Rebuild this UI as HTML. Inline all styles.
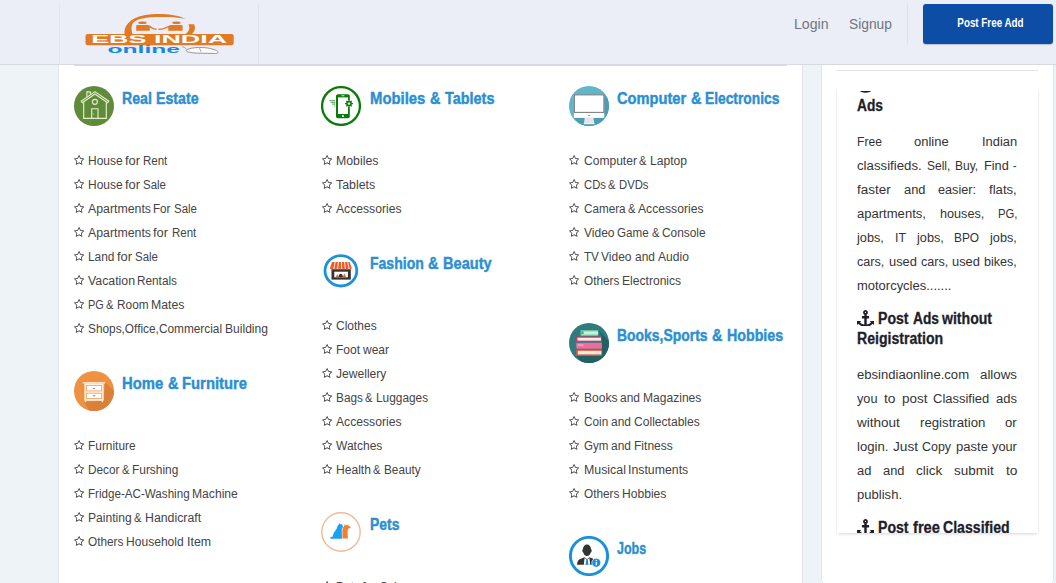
<!DOCTYPE html>
<html lang="en"><head><meta charset="utf-8"><title>EBS India Online - Free Classifieds</title>
<style>
*{box-sizing:border-box;margin:0;padding:0}
html,body{width:1056px;height:583px;overflow:hidden}
body{background:#eef3f8;font-family:"Liberation Sans",Arial,sans-serif;color:#444;position:relative}
a{color:inherit;text-decoration:none}
ul{list-style:none}
.hdr{position:absolute;left:0;top:0;width:1056px;height:65px;background:#ebeef7;border-bottom:1px solid #d6d9e0;z-index:5}
.logo{position:absolute;left:59px;top:4px;width:200px;height:60px;border-left:1px solid #e3e6ee;border-right:1px solid #e0e3eb}
.logo svg{position:absolute;left:0;top:0}
.nav a{position:absolute;top:15px;font-size:14px;line-height:18px;color:#6f7780;white-space:nowrap;transform-origin:0 50%;display:block}
.vdiv{position:absolute;left:907px;top:4px;width:1px;height:40px;background:#dcdfe8}
.btn{position:absolute;left:923px;top:4px;width:130px;height:39.5px;padding-left:5px;background:#0d4da5;border-radius:3px;color:#fff;font-weight:bold;font-size:12px;line-height:38px;text-align:center;box-shadow:0 1px 1px rgba(0,0,0,.2)}
.btn span{display:inline-block;transform-origin:50% 50%;white-space:nowrap}
.main{position:absolute;left:58px;top:65px;width:745px;height:518px;background:#fff;border-left:1px solid #e3e7ed;border-right:1px solid #e3e7ed}
.hr{position:absolute;left:74px;top:65px;width:713px;height:1px;background:#d9d9d9;z-index:6}
.cat{position:absolute;width:240px}
.ic{position:absolute;left:0;top:0;width:40px;height:40px;display:block}
.cat h3{display:flex;gap:4.45px;position:absolute;left:48px;top:.3px;-webkit-text-stroke:.45px #2b8fd2;font-size:17.3px;line-height:24px;font-weight:bold;color:#2b8fd2;white-space:nowrap;transform-origin:0 50%}
.cat ul{position:absolute;left:0;top:62px}
.cat li{height:24px;line-height:24px;font-size:12px;white-space:nowrap;color:#444;position:relative}
.cat li a{position:absolute;left:13.5px;top:1px;display:flex;gap:2.98px}
.cat b{display:block;font-weight:inherit;transform-origin:0 50%;white-space:nowrap}
.st{position:absolute;left:0;top:7.2px;width:10.2px;height:9.8px;fill:#444}
.c2 .st{left:.75px}
.c3 .st{left:.35px}
.cat .c2 a,.cat .c3 a{left:14.5px}
.side{position:absolute;left:821px;top:65px;width:233px;height:519px;background:#fff;border-radius:0 0 5px 5px;border-left:1px solid #e3e7ed;border-right:1px solid #e3e7ed}
.shr{position:absolute;left:837px;top:70px;width:201px;height:1px;background:#e3e3e3}
.card{position:absolute;left:837px;top:88px;width:201px;height:445px;background:#fff;box-shadow:0 2px 3px -1px rgba(0,0,0,.16),1px 0 0 rgba(0,0,0,.035),-1px 0 0 rgba(0,0,0,.035)}
.clip{position:absolute;left:0;top:3px;width:201px;height:442px;overflow:hidden}
.cin{position:absolute;left:20px;top:-15px;width:160px}
.card h4{font-size:16px;line-height:20px;height:20px;font-weight:bold;color:#1e1e2a;-webkit-text-stroke:.3px #1e1e2a;white-space:nowrap;position:relative}
.card h4{display:flex;align-items:center}
.card h4 .w{display:flex;gap:3.88px}
.card h4 .up{position:relative;top:-1.5px}
.card h4 b{display:block;font-weight:inherit;transform-origin:0 50%;white-space:nowrap}
.an{display:block;flex:none;width:17px;height:16.8px;fill:#1e1e2a;margin-right:4.2px;position:relative;top:-1px}
.card p{font-size:12.92px;line-height:24px;color:#333}
.card p span{display:flex;height:24px;justify-content:space-between;white-space:nowrap}
.card p span.l{justify-content:flex-start;gap:3.2px}
.card p b{display:block;font-weight:normal;transform-origin:0 50%;white-space:nowrap}
</style></head><body>
<div class="hdr">
<div class="logo">
<svg width="200" height="60" viewBox="0 0 200 60">
<g fill="#e07a24">
<path d="M64.5 30.5C63.5 22 70 14 84 11.3 92 9.8 104 9.7 112 10.9 118 11.8 122 13 125.4 14.8 118 13.4 110 13 101 13 88 13 74 14.5 72 21 71.2 24 71.5 27 72.6 30.500Z"/>
<path d="M128.4 20.3L134 20.3C136 24 134.8 27.5 131.6 30.5L125.3 30.5C129 27.5 130.4 24 128.4 20.3Z"/>
<ellipse cx="82.4" cy="18.8" rx="4.3" ry="1.25"/><path d="M76.2 26.8V22.4c0-.8.5-1.3 1.3-1.3h9.6c1.4 0 2.4.4 3.4 1l3 1.800c.9.5 1.9.7 3.1.7v1.300c-1.6 0-2.9-.3-4-.9l-2.8-1.500v3.300z"/>
<ellipse cx="116.4" cy="18.8" rx="4.3" ry="1.25"/><path d="M122.6 26.8V22.4c0-.8-.5-1.3-1.3-1.3h-9.6c-1.4 0-2.4.4-3.4 1l-5.5 2.100c-1.2.4-2.6.5-4.4.4v1.300c2.2.1 4-.1 5.4-.7l4.5-1.700v3.300z"/>
</g>
<rect x="25.5" y="30" width="148.2" height="11.2" rx="2.2" fill="#e07a24"/>
<text x="99.2" y="38.8" text-anchor="middle" font-family="Liberation Sans,Arial,sans-serif" font-weight="bold" font-size="10.4" fill="#fff" textLength="136" lengthAdjust="spacingAndGlyphs">EBS INDIA</text>
<text x="83.8" y="48.6" text-anchor="middle" font-family="Liberation Sans,Arial,sans-serif" font-weight="bold" font-size="10.8" fill="#1c86dc" textLength="72.5" lengthAdjust="spacingAndGlyphs">online</text>
<path d="M128 45.200c8-3 22-2 28.5 1.4 3 1.7 1.4 3.2-2.2 2.9-8-.5-19.5.4-26.3-1.5-2.6-1-2.6-2 0-2.800z" fill="#fafafa" stroke="#8f8f8f" stroke-width=".9"/>
<path d="M122 42.800c2 .2 3.4 1 4.6 2.600M139.5 44.200l1.5 3.6" fill="none" stroke="#8f8f8f" stroke-width=".8"/>
</svg>
</div>
<div class="nav"><a href="#" style="left:794px;transform:scaleX(1.0078)">Login</a><a href="#" style="left:848.6px;transform:scaleX(0.9839)">Signup</a></div>
<div class="vdiv"></div>
<a href="#" class="btn"><span style="transform:scaleX(0.8182)">Post Free Add</span></a>
</div>
<div class="main"></div>
<div class="hr"></div>
<div class="cat" style="left:74px;top:86px"><svg class="ic" viewBox="0 0 40 40"><circle cx="20" cy="20" r="20" fill="#5f8b3b"/><g fill="none" stroke="#e6eec9" stroke-width="1.150" stroke-linejoin="miter"><path d="M12.9 10.800V5.900h3.400v2.6"/><path d="M7.2 15.2 20.9 5.6 34.8 15.2 33.6 16.8 20.9 8 8.4 16.8Z"/><path d="M9.7 16.2V32.4H32.3V16.2"/><circle cx="20.9" cy="15.8" r="2.5"/><path d="M17.7 32.4V22.7H24V32.4"/></g><circle cx="19.6" cy="28" r=".6" fill="#e4edc6"/></svg><h3><b style="width:29.86px;transform:scaleX(0.8179)">Real</b> <b style="width:42.58px;transform:scaleX(0.8208)">Estate</b></h3><ul><li><svg class="st" viewBox="0 -1504 1664 1587"><path transform="scale(1,-1)" d="M1137 532 1443 829 1021 891 832 1273 643 891 221 829 527 532 454 111 832 310 1209 111ZM1664 889Q1664 867 1638 841L1275 487L1361 -13Q1362 -20 1362 -33Q1362 -83 1321 -83Q1302 -83 1281 -71L832 165L383 -71Q361 -83 343 -83Q322 -83 311.5 -68.5Q301 -54 301 -33Q301 -27 303 -13L389 487L25 841Q0 868 0 889Q0 926 56 935L558 1008L783 1463Q802 1504 832.0 1504.0Q862 1504 881 1463L1106 1008L1608 935Q1664 926 1664 889Z"/></svg><a href="#"><b style="width:34.58px;transform:scaleX(0.9968)">House</b> <b style="width:15.09px;transform:scaleX(1.0769)">for</b> <b style="width:24.31px;transform:scaleX(0.9587)">Rent</b></a></li><li><svg class="st" viewBox="0 -1504 1664 1587"><path transform="scale(1,-1)" d="M1137 532 1443 829 1021 891 832 1273 643 891 221 829 527 532 454 111 832 310 1209 111ZM1664 889Q1664 867 1638 841L1275 487L1361 -13Q1362 -20 1362 -33Q1362 -83 1321 -83Q1302 -83 1281 -71L832 165L383 -71Q361 -83 343 -83Q322 -83 311.5 -68.5Q301 -54 301 -33Q301 -27 303 -13L389 487L25 841Q0 868 0 889Q0 926 56 935L558 1008L783 1463Q802 1504 832.0 1504.0Q862 1504 881 1463L1106 1008L1608 935Q1664 926 1664 889Z"/></svg><a href="#"><b style="width:34.58px;transform:scaleX(0.9968)">House</b> <b style="width:15.09px;transform:scaleX(1.0769)">for</b> <b style="width:22.94px;transform:scaleX(0.9545)">Sale</b></a></li><li><svg class="st" viewBox="0 -1504 1664 1587"><path transform="scale(1,-1)" d="M1137 532 1443 829 1021 891 832 1273 643 891 221 829 527 532 454 111 832 310 1209 111ZM1664 889Q1664 867 1638 841L1275 487L1361 -13Q1362 -20 1362 -33Q1362 -83 1321 -83Q1302 -83 1281 -71L832 165L383 -71Q361 -83 343 -83Q322 -83 311.5 -68.5Q301 -54 301 -33Q301 -27 303 -13L389 487L25 841Q0 868 0 889Q0 926 56 935L558 1008L783 1463Q802 1504 832.0 1504.0Q862 1504 881 1463L1106 1008L1608 935Q1664 926 1664 889Z"/></svg><a href="#"><b style="width:63.02px;transform:scaleX(1.0270)">Apartments</b> <b style="width:17.42px;transform:scaleX(0.9679)">For</b> <b style="width:22.94px;transform:scaleX(0.9545)">Sale</b></a></li><li><svg class="st" viewBox="0 -1504 1664 1587"><path transform="scale(1,-1)" d="M1137 532 1443 829 1021 891 832 1273 643 891 221 829 527 532 454 111 832 310 1209 111ZM1664 889Q1664 867 1638 841L1275 487L1361 -13Q1362 -20 1362 -33Q1362 -83 1321 -83Q1302 -83 1281 -71L832 165L383 -71Q361 -83 343 -83Q322 -83 311.5 -68.5Q301 -54 301 -33Q301 -27 303 -13L389 487L25 841Q0 868 0 889Q0 926 56 935L558 1008L783 1463Q802 1504 832.0 1504.0Q862 1504 881 1463L1106 1008L1608 935Q1664 926 1664 889Z"/></svg><a href="#"><b style="width:63.02px;transform:scaleX(1.0270)">Apartments</b> <b style="width:15.09px;transform:scaleX(1.0769)">for</b> <b style="width:24.31px;transform:scaleX(0.9587)">Rent</b></a></li><li><svg class="st" viewBox="0 -1504 1664 1587"><path transform="scale(1,-1)" d="M1137 532 1443 829 1021 891 832 1273 643 891 221 829 527 532 454 111 832 310 1209 111ZM1664 889Q1664 867 1638 841L1275 487L1361 -13Q1362 -20 1362 -33Q1362 -83 1321 -83Q1302 -83 1281 -71L832 165L383 -71Q361 -83 343 -83Q322 -83 311.5 -68.5Q301 -54 301 -33Q301 -27 303 -13L389 487L25 841Q0 868 0 889Q0 926 56 935L558 1008L783 1463Q802 1504 832.0 1504.0Q862 1504 881 1463L1106 1008L1608 935Q1664 926 1664 889Z"/></svg><a href="#"><b style="width:26.39px;transform:scaleX(0.9883)">Land</b> <b style="width:15.09px;transform:scaleX(1.0769)">for</b> <b style="width:22.94px;transform:scaleX(0.9545)">Sale</b></a></li><li><svg class="st" viewBox="0 -1504 1664 1587"><path transform="scale(1,-1)" d="M1137 532 1443 829 1021 891 832 1273 643 891 221 829 527 532 454 111 832 310 1209 111ZM1664 889Q1664 867 1638 841L1275 487L1361 -13Q1362 -20 1362 -33Q1362 -83 1321 -83Q1302 -83 1281 -71L832 165L383 -71Q361 -83 343 -83Q322 -83 311.5 -68.5Q301 -54 301 -33Q301 -27 303 -13L389 487L25 841Q0 868 0 889Q0 926 56 935L558 1008L783 1463Q802 1504 832.0 1504.0Q862 1504 881 1463L1106 1008L1608 935Q1664 926 1664 889Z"/></svg><a href="#"><b style="width:47.03px;transform:scaleX(1.0266)">Vacation</b> <b style="width:39.95px;transform:scaleX(0.9820)">Rentals</b></a></li><li><svg class="st" viewBox="0 -1504 1664 1587"><path transform="scale(1,-1)" d="M1137 532 1443 829 1021 891 832 1273 643 891 221 829 527 532 454 111 832 310 1209 111ZM1664 889Q1664 867 1638 841L1275 487L1361 -13Q1362 -20 1362 -33Q1362 -83 1321 -83Q1302 -83 1281 -71L832 165L383 -71Q361 -83 343 -83Q322 -83 311.5 -68.5Q301 -54 301 -33Q301 -27 303 -13L389 487L25 841Q0 868 0 889Q0 926 56 935L558 1008L783 1463Q802 1504 832.0 1504.0Q862 1504 881 1463L1106 1008L1608 935Q1664 926 1664 889Z"/></svg><a href="#"><b style="width:15.75px;transform:scaleX(0.9081)">PG</b> <b style="width:7.47px;transform:scaleX(0.9318)">&amp;</b> <b style="width:31.61px;transform:scaleX(0.9873)">Room</b> <b style="width:33.50px;transform:scaleX(1.0249)">Mates</b></a></li><li><svg class="st" viewBox="0 -1504 1664 1587"><path transform="scale(1,-1)" d="M1137 532 1443 829 1021 891 832 1273 643 891 221 829 527 532 454 111 832 310 1209 111ZM1664 889Q1664 867 1638 841L1275 487L1361 -13Q1362 -20 1362 -33Q1362 -83 1321 -83Q1302 -83 1281 -71L832 165L383 -71Q361 -83 343 -83Q322 -83 311.5 -68.5Q301 -54 301 -33Q301 -27 303 -13L389 487L25 841Q0 868 0 889Q0 926 56 935L558 1008L783 1463Q802 1504 832.0 1504.0Q862 1504 881 1463L1106 1008L1608 935Q1664 926 1664 889Z"/></svg><a href="#"><b style="width:134.05px;transform:scaleX(0.9869)">Shops,Office,Commercial</b> <b style="width:42.98px;transform:scaleX(1.0066)">Building</b></a></li></ul></div>
<div class="cat" style="left:74px;top:371px"><svg class="ic" viewBox="0 0 40 40"><defs><clipPath id="cf"><circle cx="20" cy="20" r="20"/></clipPath></defs><circle cx="20" cy="20" r="20" fill="#ee9142"/><g clip-path="url(#cf)"><path d="M31.2 11.3 60 40V70H30L10.4 30.8 29.6 29.8Z" fill="#da8038"/><rect x="8.5" y="11.2" width="22.7" height="1.2" fill="#fdf3e4"/><rect x="10.4" y="12.4" width="19.2" height="17.4" fill="#fdf3e4"/><rect x="12.3" y="14.6" width="15.4" height="5.3" fill="#fff" stroke="#ee9b58" stroke-width=".8"/><rect x="12.3" y="22.2" width="15.4" height="5.2" fill="#fff" stroke="#ee9b58" stroke-width=".8"/><rect x="18.8" y="17" width="2.4" height=".7" fill="#8a5a3a"/><rect x="18.8" y="24.5" width="2.4" height=".7" fill="#5a3a2a"/><rect x="11" y="29.8" width="1.2" height="1.4" fill="#fdf3e4"/><rect x="27.8" y="29.8" width="1.2" height="1.4" fill="#fdf3e4"/></g></svg><h3><b style="width:41.18px;transform:scaleX(0.8576)">Home</b> <b style="width:10.43px;transform:scaleX(0.8352)">&amp;</b> <b style="width:65.08px;transform:scaleX(0.8581)">Furniture</b></h3><ul><li><svg class="st" viewBox="0 -1504 1664 1587"><path transform="scale(1,-1)" d="M1137 532 1443 829 1021 891 832 1273 643 891 221 829 527 532 454 111 832 310 1209 111ZM1664 889Q1664 867 1638 841L1275 487L1361 -13Q1362 -20 1362 -33Q1362 -83 1321 -83Q1302 -83 1281 -71L832 165L383 -71Q361 -83 343 -83Q322 -83 311.5 -68.5Q301 -54 301 -33Q301 -27 303 -13L389 487L25 841Q0 868 0 889Q0 926 56 935L558 1008L783 1463Q802 1504 832.0 1504.0Q862 1504 881 1463L1106 1008L1608 935Q1664 926 1664 889Z"/></svg><a href="#"><b style="width:47.59px;transform:scaleX(0.9909)">Furniture</b></a></li><li><svg class="st" viewBox="0 -1504 1664 1587"><path transform="scale(1,-1)" d="M1137 532 1443 829 1021 891 832 1273 643 891 221 829 527 532 454 111 832 310 1209 111ZM1664 889Q1664 867 1638 841L1275 487L1361 -13Q1362 -20 1362 -33Q1362 -83 1321 -83Q1302 -83 1281 -71L832 165L383 -71Q361 -83 343 -83Q322 -83 311.5 -68.5Q301 -54 301 -33Q301 -27 303 -13L389 487L25 841Q0 868 0 889Q0 926 56 935L558 1008L783 1463Q802 1504 832.0 1504.0Q862 1504 881 1463L1106 1008L1608 935Q1664 926 1664 889Z"/></svg><a href="#"><b style="width:31.44px;transform:scaleX(0.9819)">Decor</b> <b style="width:7.47px;transform:scaleX(0.9318)">&amp;</b> <b style="width:46.28px;transform:scaleX(0.9913)">Furshing</b></a></li><li><svg class="st" viewBox="0 -1504 1664 1587"><path transform="scale(1,-1)" d="M1137 532 1443 829 1021 891 832 1273 643 891 221 829 527 532 454 111 832 310 1209 111ZM1664 889Q1664 867 1638 841L1275 487L1361 -13Q1362 -20 1362 -33Q1362 -83 1321 -83Q1302 -83 1281 -71L832 165L383 -71Q361 -83 343 -83Q322 -83 311.5 -68.5Q301 -54 301 -33Q301 -27 303 -13L389 487L25 841Q0 868 0 889Q0 926 56 935L558 1008L783 1463Q802 1504 832.0 1504.0Q862 1504 881 1463L1106 1008L1608 935Q1664 926 1664 889Z"/></svg><a href="#"><b style="width:101.61px;transform:scaleX(0.9684)">Fridge-AC-Washing</b> <b style="width:45.81px;transform:scaleX(1.0100)">Machine</b></a></li><li><svg class="st" viewBox="0 -1504 1664 1587"><path transform="scale(1,-1)" d="M1137 532 1443 829 1021 891 832 1273 643 891 221 829 527 532 454 111 832 310 1209 111ZM1664 889Q1664 867 1638 841L1275 487L1361 -13Q1362 -20 1362 -33Q1362 -83 1321 -83Q1302 -83 1281 -71L832 165L383 -71Q361 -83 343 -83Q322 -83 311.5 -68.5Q301 -54 301 -33Q301 -27 303 -13L389 487L25 841Q0 868 0 889Q0 926 56 935L558 1008L783 1463Q802 1504 832.0 1504.0Q862 1504 881 1463L1106 1008L1608 935Q1664 926 1664 889Z"/></svg><a href="#"><b style="width:43.80px;transform:scaleX(1.0097)">Painting</b> <b style="width:7.47px;transform:scaleX(0.9318)">&amp;</b> <b style="width:56.14px;transform:scaleX(1.0263)">Handicraft</b></a></li><li><svg class="st" viewBox="0 -1504 1664 1587"><path transform="scale(1,-1)" d="M1137 532 1443 829 1021 891 832 1273 643 891 221 829 527 532 454 111 832 310 1209 111ZM1664 889Q1664 867 1638 841L1275 487L1361 -13Q1362 -20 1362 -33Q1362 -83 1321 -83Q1302 -83 1281 -71L832 165L383 -71Q361 -83 343 -83Q322 -83 311.5 -68.5Q301 -54 301 -33Q301 -27 303 -13L389 487L25 841Q0 868 0 889Q0 926 56 935L558 1008L783 1463Q802 1504 832.0 1504.0Q862 1504 881 1463L1106 1008L1608 935Q1664 926 1664 889Z"/></svg><a href="#"><b style="width:35.42px;transform:scaleX(0.9835)">Others</b> <b style="width:57.72px;transform:scaleX(1.0060)">Household</b> <b style="width:24.08px;transform:scaleX(1.0315)">Item</b></a></li></ul></div>
<div class="cat" style="left:321px;top:86px"><svg class="ic" viewBox="0 0 40 40"><circle cx="20" cy="20" r="18.9" fill="#fff" stroke="#0b7a0b" stroke-width="2.3"/><rect x="15" y="8.2" width="13.8" height="24" rx="1.8" fill="#0b7a0b"/><rect x="17" y="11.4" width="10" height="16.6" fill="#fff"/><rect x="20.4" y="9.4" width="3" height=".8" fill="#fff"/><rect x="21" y="29.2" width="1.8" height="1.8" fill="#fff"/><circle cx="28" cy="17.6" r="3.6" fill="#fff"/><circle cx="28" cy="17.6" r="2.1" fill="none" stroke="#0b7a0b" stroke-width="1.5"/><g stroke="#0b7a0b" stroke-width="1.1"><path d="M28 13.6v8M24 17.6h8M25.2 14.8l5.6 5.6M30.8 14.8l-5.6 5.6"/></g><circle cx="28" cy="17.6" r="1.2" fill="#fff"/><g stroke="#0b7a0b" stroke-width=".7"><path d="M8.4 14.7h5.8M9.6 16.4h4.6M11 18.1h3.2"/></g><circle cx="13.7" cy="19.9" r=".5" fill="#0b7a0b"/></svg><h3 style="left:49px"><b style="width:55.39px;transform:scaleX(0.8608)">Mobiles</b> <b style="width:10.43px;transform:scaleX(0.8352)">&amp;</b> <b style="width:49.44px;transform:scaleX(0.8349)">Tablets</b></h3><ul class="c2"><li><svg class="st" viewBox="0 -1504 1664 1587"><path transform="scale(1,-1)" d="M1137 532 1443 829 1021 891 832 1273 643 891 221 829 527 532 454 111 832 310 1209 111ZM1664 889Q1664 867 1638 841L1275 487L1361 -13Q1362 -20 1362 -33Q1362 -83 1321 -83Q1302 -83 1281 -71L832 165L383 -71Q361 -83 343 -83Q322 -83 311.5 -68.5Q301 -54 301 -33Q301 -27 303 -13L389 487L25 841Q0 868 0 889Q0 926 56 935L558 1008L783 1463Q802 1504 832.0 1504.0Q862 1504 881 1463L1106 1008L1608 935Q1664 926 1664 889Z"/></svg><a href="#"><b style="width:42.45px;transform:scaleX(1.0264)">Mobiles</b></a></li><li><svg class="st" viewBox="0 -1504 1664 1587"><path transform="scale(1,-1)" d="M1137 532 1443 829 1021 891 832 1273 643 891 221 829 527 532 454 111 832 310 1209 111ZM1664 889Q1664 867 1638 841L1275 487L1361 -13Q1362 -20 1362 -33Q1362 -83 1321 -83Q1302 -83 1281 -71L832 165L383 -71Q361 -83 343 -83Q322 -83 311.5 -68.5Q301 -54 301 -33Q301 -27 303 -13L389 487L25 841Q0 868 0 889Q0 926 56 935L558 1008L783 1463Q802 1504 832.0 1504.0Q862 1504 881 1463L1106 1008L1608 935Q1664 926 1664 889Z"/></svg><a href="#"><b style="width:39.17px;transform:scaleX(1.0300)">Tablets</b></a></li><li><svg class="st" viewBox="0 -1504 1664 1587"><path transform="scale(1,-1)" d="M1137 532 1443 829 1021 891 832 1273 643 891 221 829 527 532 454 111 832 310 1209 111ZM1664 889Q1664 867 1638 841L1275 487L1361 -13Q1362 -20 1362 -33Q1362 -83 1321 -83Q1302 -83 1281 -71L832 165L383 -71Q361 -83 343 -83Q322 -83 311.5 -68.5Q301 -54 301 -33Q301 -27 303 -13L389 487L25 841Q0 868 0 889Q0 926 56 935L558 1008L783 1463Q802 1504 832.0 1504.0Q862 1504 881 1463L1106 1008L1608 935Q1664 926 1664 889Z"/></svg><a href="#"><b style="width:65.53px;transform:scaleX(1.0130)">Accessories</b></a></li></ul></div>
<div class="cat" style="left:321px;top:251px"><svg class="ic" viewBox="0 0 40 40"><ellipse cx="19.9" cy="19.8" rx="15.9" ry="15.2" fill="#fff" stroke="#1c92dc" stroke-width="2.8"/><rect x="10.5" y="18.2" width="19.3" height="10.4" fill="#333"/><rect x="13.3" y="20.7" width="13.6" height="5.6" fill="#fff"/><path d="M14.8 26l1.5-3 1.3 3z" fill="#e8622a"/><path d="M17.5 26c.2-2 1-3.2 2.2-3.200s2 1.2 2.2 3.200z" fill="#333"/><path d="M21.8 26l1.5-3.8 1.7 3.800z" fill="#e8622a"/><path d="M11 11h17.600l2.1 6c0 .9-.6 1.5-1.5 1.500s-1.6-.6-1.6-1.500c0 .9-.7 1.5-1.6 1.500s-1.5-.6-1.5-1.500c0 .9-.7 1.5-1.6 1.500s-1.5-.6-1.5-1.500c0 .9-.7 1.5-1.6 1.500s-1.5-.6-1.5-1.500c0 .9-.7 1.5-1.6 1.500s-1.5-.6-1.5-1.500c0 .9-.7 1.5-1.6 1.500s-1.5-.6-1.5-1.500c0 .9-.7 1.5-1.6 1.5-.9 0-1.5-.6-1.5-1.500z" fill="#ee5a28"/><g stroke="#fff" stroke-width=".9" fill="none"><path d="M14.2 11l-1.4 7M17.4 11l-.8 7M20.5 11l0 7M23.6 11l.8 7M26.7 11l1.5 7"/></g></svg><h3 style="left:49px"><b style="width:53.78px;transform:scaleX(0.8118)">Fashion</b> <b style="width:10.43px;transform:scaleX(0.8352)">&amp;</b> <b style="width:48.60px;transform:scaleX(0.8434)">Beauty</b></h3><ul class="c2"><li><svg class="st" viewBox="0 -1504 1664 1587"><path transform="scale(1,-1)" d="M1137 532 1443 829 1021 891 832 1273 643 891 221 829 527 532 454 111 832 310 1209 111ZM1664 889Q1664 867 1638 841L1275 487L1361 -13Q1362 -20 1362 -33Q1362 -83 1321 -83Q1302 -83 1281 -71L832 165L383 -71Q361 -83 343 -83Q322 -83 311.5 -68.5Q301 -54 301 -33Q301 -27 303 -13L389 487L25 841Q0 868 0 889Q0 926 56 935L558 1008L783 1463Q802 1504 832.0 1504.0Q862 1504 881 1463L1106 1008L1608 935Q1664 926 1664 889Z"/></svg><a href="#"><b style="width:40.67px;transform:scaleX(0.9996)">Clothes</b></a></li><li><svg class="st" viewBox="0 -1504 1664 1587"><path transform="scale(1,-1)" d="M1137 532 1443 829 1021 891 832 1273 643 891 221 829 527 532 454 111 832 310 1209 111ZM1664 889Q1664 867 1638 841L1275 487L1361 -13Q1362 -20 1362 -33Q1362 -83 1321 -83Q1302 -83 1281 -71L832 165L383 -71Q361 -83 343 -83Q322 -83 311.5 -68.5Q301 -54 301 -33Q301 -27 303 -13L389 487L25 841Q0 868 0 889Q0 926 56 935L558 1008L783 1463Q802 1504 832.0 1504.0Q862 1504 881 1463L1106 1008L1608 935Q1664 926 1664 889Z"/></svg><a href="#"><b style="width:24.12px;transform:scaleX(1.0046)">Foot</b> <b style="width:25.98px;transform:scaleX(0.9988)">wear</b></a></li><li><svg class="st" viewBox="0 -1504 1664 1587"><path transform="scale(1,-1)" d="M1137 532 1443 829 1021 891 832 1273 643 891 221 829 527 532 454 111 832 310 1209 111ZM1664 889Q1664 867 1638 841L1275 487L1361 -13Q1362 -20 1362 -33Q1362 -83 1321 -83Q1302 -83 1281 -71L832 165L383 -71Q361 -83 343 -83Q322 -83 311.5 -68.5Q301 -54 301 -33Q301 -27 303 -13L389 487L25 841Q0 868 0 889Q0 926 56 935L558 1008L783 1463Q802 1504 832.0 1504.0Q862 1504 881 1463L1106 1008L1608 935Q1664 926 1664 889Z"/></svg><a href="#"><b style="width:50.42px;transform:scaleX(1.0081)">Jewellery</b></a></li><li><svg class="st" viewBox="0 -1504 1664 1587"><path transform="scale(1,-1)" d="M1137 532 1443 829 1021 891 832 1273 643 891 221 829 527 532 454 111 832 310 1209 111ZM1664 889Q1664 867 1638 841L1275 487L1361 -13Q1362 -20 1362 -33Q1362 -83 1321 -83Q1302 -83 1281 -71L832 165L383 -71Q361 -83 343 -83Q322 -83 311.5 -68.5Q301 -54 301 -33Q301 -27 303 -13L389 487L25 841Q0 868 0 889Q0 926 56 935L558 1008L783 1463Q802 1504 832.0 1504.0Q862 1504 881 1463L1106 1008L1608 935Q1664 926 1664 889Z"/></svg><a href="#"><b style="width:26.94px;transform:scaleX(0.9846)">Bags</b> <b style="width:7.47px;transform:scaleX(0.9318)">&amp;</b> <b style="width:52.12px;transform:scaleX(0.9887)">Luggages</b></a></li><li><svg class="st" viewBox="0 -1504 1664 1587"><path transform="scale(1,-1)" d="M1137 532 1443 829 1021 891 832 1273 643 891 221 829 527 532 454 111 832 310 1209 111ZM1664 889Q1664 867 1638 841L1275 487L1361 -13Q1362 -20 1362 -33Q1362 -83 1321 -83Q1302 -83 1281 -71L832 165L383 -71Q361 -83 343 -83Q322 -83 311.5 -68.5Q301 -54 301 -33Q301 -27 303 -13L389 487L25 841Q0 868 0 889Q0 926 56 935L558 1008L783 1463Q802 1504 832.0 1504.0Q862 1504 881 1463L1106 1008L1608 935Q1664 926 1664 889Z"/></svg><a href="#"><b style="width:65.53px;transform:scaleX(1.0130)">Accessories</b></a></li><li><svg class="st" viewBox="0 -1504 1664 1587"><path transform="scale(1,-1)" d="M1137 532 1443 829 1021 891 832 1273 643 891 221 829 527 532 454 111 832 310 1209 111ZM1664 889Q1664 867 1638 841L1275 487L1361 -13Q1362 -20 1362 -33Q1362 -83 1321 -83Q1302 -83 1281 -71L832 165L383 -71Q361 -83 343 -83Q322 -83 311.5 -68.5Q301 -54 301 -33Q301 -27 303 -13L389 487L25 841Q0 868 0 889Q0 926 56 935L558 1008L783 1463Q802 1504 832.0 1504.0Q862 1504 881 1463L1106 1008L1608 935Q1664 926 1664 889Z"/></svg><a href="#"><b style="width:46.36px;transform:scaleX(1.0024)">Watches</b></a></li><li><svg class="st" viewBox="0 -1504 1664 1587"><path transform="scale(1,-1)" d="M1137 532 1443 829 1021 891 832 1273 643 891 221 829 527 532 454 111 832 310 1209 111ZM1664 889Q1664 867 1638 841L1275 487L1361 -13Q1362 -20 1362 -33Q1362 -83 1321 -83Q1302 -83 1281 -71L832 165L383 -71Q361 -83 343 -83Q322 -83 311.5 -68.5Q301 -54 301 -33Q301 -27 303 -13L389 487L25 841Q0 868 0 889Q0 926 56 935L558 1008L783 1463Q802 1504 832.0 1504.0Q862 1504 881 1463L1106 1008L1608 935Q1664 926 1664 889Z"/></svg><a href="#"><b style="width:34.91px;transform:scaleX(1.0063)">Health</b> <b style="width:7.47px;transform:scaleX(0.9318)">&amp;</b> <b style="width:36.59px;transform:scaleX(0.9795)">Beauty</b></a></li></ul></div>
<div class="cat" style="left:321px;top:512px"><svg class="ic" viewBox="0 0 40 40"><circle cx="20" cy="20" r="19.2" fill="#fff" stroke="#f1ba98" stroke-width="1.4"/><path d="M9 26c.4-1 1.4-1.4 2.6-1.2.4-2.6 1.5-4.7 3-6.6.9-1.1 1.5-2.3 1.8-3.7.2-1.1.8-1.8 1.5-2.100l.4-1.3.9 1.100c.5 0 .9.1 1.2.300l.7-1 .2 1.600c.5.5.7 1.2.6 2-.1.8-.5 1.4-1.1 1.8-.2 1.3.1 2.4.1 3.800v6H11c-1.1.1-1.8-.1-2-.7z" fill="#1ba1f2"/><path d="M21.4 26.400v-7.200c0-2.4.6-4.1 1.9-5.100l.2-1.9 1.2 1.100c.5-.2 1-.2 1.5-.1l.9-1.1.3 1.7 2.3 1.3-.3 1.1-2.2.4c-.5 1.2-.6 2.7-.6 4.400l.3 5.400z" fill="#f0812f"/></svg><h3 style="left:49px"><b style="width:29.37px;transform:scaleX(0.8042)">Pets</b></h3><ul class="c2"><li><svg class="st" viewBox="0 -1504 1664 1587"><path transform="scale(1,-1)" d="M1137 532 1443 829 1021 891 832 1273 643 891 221 829 527 532 454 111 832 310 1209 111ZM1664 889Q1664 867 1638 841L1275 487L1361 -13Q1362 -20 1362 -33Q1362 -83 1321 -83Q1302 -83 1281 -71L832 165L383 -71Q361 -83 343 -83Q322 -83 311.5 -68.5Q301 -54 301 -33Q301 -27 303 -13L389 487L25 841Q0 868 0 889Q0 926 56 935L558 1008L783 1463Q802 1504 832.0 1504.0Q862 1504 881 1463L1106 1008L1608 935Q1664 926 1664 889Z"/></svg><a href="#"><b style="width:23.98px;transform:scaleX(0.9987)">Pets</b> <b style="width:15.09px;transform:scaleX(1.0769)">for</b> <b style="width:22.94px;transform:scaleX(0.9545)">Sale</b></a></li><li><svg class="st" viewBox="0 -1504 1664 1587"><path transform="scale(1,-1)" d="M1137 532 1443 829 1021 891 832 1273 643 891 221 829 527 532 454 111 832 310 1209 111ZM1664 889Q1664 867 1638 841L1275 487L1361 -13Q1362 -20 1362 -33Q1362 -83 1321 -83Q1302 -83 1281 -71L832 165L383 -71Q361 -83 343 -83Q322 -83 311.5 -68.5Q301 -54 301 -33Q301 -27 303 -13L389 487L25 841Q0 868 0 889Q0 926 56 935L558 1008L783 1463Q802 1504 832.0 1504.0Q862 1504 881 1463L1106 1008L1608 935Q1664 926 1664 889Z"/></svg><a href="#"><b style="width:17.80px;transform:scaleX(0.9879)">Pet</b> <b style="width:26.97px;transform:scaleX(0.9857)">Food</b></a></li></ul></div>
<div class="cat" style="left:569px;top:86px"><svg class="ic" viewBox="0 0 40 40"><defs><clipPath id="cc"><circle cx="20" cy="20" r="20"/></clipPath></defs><circle cx="20" cy="20" r="20" fill="#5fb6cb"/><g clip-path="url(#cc)"><path d="M35.3 8.5 75 48 45 75 4.9 31.9Z" fill="#4c9db2"/><rect x="4.9" y="8.5" width="30.4" height="23.4" fill="#fff"/><rect x="4.9" y="8.5" width="30.4" height="18.2" fill="#4d5258"/><rect x="5.7" y="9.3" width="28.8" height="16.6" fill="#fff"/><path d="M24.5 31.9 25.4 38H14.8L15.7 31.9Z" fill="#e3e6ea"/><rect x="14.8" y="37.2" width="10.6" height="1" fill="#f4f5f7"/><circle cx="20" cy="29.4" r=".6" fill="#444"/></g></svg><h3><b style="width:69.16px;transform:scaleX(0.8474)">Computer</b> <b style="width:10.43px;transform:scaleX(0.8352)">&amp;</b> <b style="width:74.33px;transform:scaleX(0.7977)">Electronics</b></h3><ul class="c3"><li><svg class="st" viewBox="0 -1504 1664 1587"><path transform="scale(1,-1)" d="M1137 532 1443 829 1021 891 832 1273 643 891 221 829 527 532 454 111 832 310 1209 111ZM1664 889Q1664 867 1638 841L1275 487L1361 -13Q1362 -20 1362 -33Q1362 -83 1321 -83Q1302 -83 1281 -71L832 165L383 -71Q361 -83 343 -83Q322 -83 311.5 -68.5Q301 -54 301 -33Q301 -27 303 -13L389 487L25 841Q0 868 0 889Q0 926 56 935L558 1008L783 1463Q802 1504 832.0 1504.0Q862 1504 881 1463L1106 1008L1608 935Q1664 926 1664 889Z"/></svg><a href="#"><b style="width:52.89px;transform:scaleX(1.0039)">Computer</b> <b style="width:7.47px;transform:scaleX(0.9318)">&amp;</b> <b style="width:37.12px;transform:scaleX(1.0115)">Laptop</b></a></li><li><svg class="st" viewBox="0 -1504 1664 1587"><path transform="scale(1,-1)" d="M1137 532 1443 829 1021 891 832 1273 643 891 221 829 527 532 454 111 832 310 1209 111ZM1664 889Q1664 867 1638 841L1275 487L1361 -13Q1362 -20 1362 -33Q1362 -83 1321 -83Q1302 -83 1281 -71L832 165L383 -71Q361 -83 343 -83Q322 -83 311.5 -68.5Q301 -54 301 -33Q301 -27 303 -13L389 487L25 841Q0 868 0 889Q0 926 56 935L558 1008L783 1463Q802 1504 832.0 1504.0Q862 1504 881 1463L1106 1008L1608 935Q1664 926 1664 889Z"/></svg><a href="#"><b style="width:21.89px;transform:scaleX(0.9378)">CDs</b> <b style="width:7.47px;transform:scaleX(0.9318)">&amp;</b> <b style="width:29.47px;transform:scaleX(0.9402)">DVDs</b></a></li><li><svg class="st" viewBox="0 -1504 1664 1587"><path transform="scale(1,-1)" d="M1137 532 1443 829 1021 891 832 1273 643 891 221 829 527 532 454 111 832 310 1209 111ZM1664 889Q1664 867 1638 841L1275 487L1361 -13Q1362 -20 1362 -33Q1362 -83 1321 -83Q1302 -83 1281 -71L832 165L383 -71Q361 -83 343 -83Q322 -83 311.5 -68.5Q301 -54 301 -33Q301 -27 303 -13L389 487L25 841Q0 868 0 889Q0 926 56 935L558 1008L783 1463Q802 1504 832.0 1504.0Q862 1504 881 1463L1106 1008L1608 935Q1664 926 1664 889Z"/></svg><a href="#"><b style="width:41.59px;transform:scaleX(0.9744)">Camera</b> <b style="width:7.47px;transform:scaleX(0.9318)">&amp;</b> <b style="width:65.53px;transform:scaleX(1.0130)">Accessories</b></a></li><li><svg class="st" viewBox="0 -1504 1664 1587"><path transform="scale(1,-1)" d="M1137 532 1443 829 1021 891 832 1273 643 891 221 829 527 532 454 111 832 310 1209 111ZM1664 889Q1664 867 1638 841L1275 487L1361 -13Q1362 -20 1362 -33Q1362 -83 1321 -83Q1302 -83 1281 -71L832 165L383 -71Q361 -83 343 -83Q322 -83 311.5 -68.5Q301 -54 301 -33Q301 -27 303 -13L389 487L25 841Q0 868 0 889Q0 926 56 935L558 1008L783 1463Q802 1504 832.0 1504.0Q862 1504 881 1463L1106 1008L1608 935Q1664 926 1664 889Z"/></svg><a href="#"><b style="width:30.55px;transform:scaleX(1.0021)">Video</b> <b style="width:31.59px;transform:scaleX(0.9665)">Game</b> <b style="width:7.47px;transform:scaleX(0.9318)">&amp;</b> <b style="width:43.61px;transform:scaleX(0.9904)">Console</b></a></li><li><svg class="st" viewBox="0 -1504 1664 1587"><path transform="scale(1,-1)" d="M1137 532 1443 829 1021 891 832 1273 643 891 221 829 527 532 454 111 832 310 1209 111ZM1664 889Q1664 867 1638 841L1275 487L1361 -13Q1362 -20 1362 -33Q1362 -83 1321 -83Q1302 -83 1281 -71L832 165L383 -71Q361 -83 343 -83Q322 -83 311.5 -68.5Q301 -54 301 -33Q301 -27 303 -13L389 487L25 841Q0 868 0 889Q0 926 56 935L558 1008L783 1463Q802 1504 832.0 1504.0Q862 1504 881 1463L1106 1008L1608 935Q1664 926 1664 889Z"/></svg><a href="#"><b style="width:14.91px;transform:scaleX(0.9715)">TV</b> <b style="width:30.55px;transform:scaleX(1.0021)">Video</b> <b style="width:19.92px;transform:scaleX(0.9945)">and</b> <b style="width:30.92px;transform:scaleX(1.0071)">Audio</b></a></li><li><svg class="st" viewBox="0 -1504 1664 1587"><path transform="scale(1,-1)" d="M1137 532 1443 829 1021 891 832 1273 643 891 221 829 527 532 454 111 832 310 1209 111ZM1664 889Q1664 867 1638 841L1275 487L1361 -13Q1362 -20 1362 -33Q1362 -83 1321 -83Q1302 -83 1281 -71L832 165L383 -71Q361 -83 343 -83Q322 -83 311.5 -68.5Q301 -54 301 -33Q301 -27 303 -13L389 487L25 841Q0 868 0 889Q0 926 56 935L558 1008L783 1463Q802 1504 832.0 1504.0Q862 1504 881 1463L1106 1008L1608 935Q1664 926 1664 889Z"/></svg><a href="#"><b style="width:35.42px;transform:scaleX(0.9835)">Others</b> <b style="width:59.12px;transform:scaleX(1.0075)">Electronics</b></a></li></ul></div>
<div class="cat" style="left:569px;top:323px"><svg class="ic" viewBox="0 0 40 40"><defs><clipPath id="cb"><circle cx="20" cy="20" r="20"/></clipPath></defs><circle cx="20" cy="20" r="20" fill="#2f7b80"/><g clip-path="url(#cb)"><path d="M29.1 7.2 60 38V70H40L7.2 33 33 26.5V13.4Z" fill="#235f65"/><rect x="11.6" y="7.2" width="17.5" height="5.6" rx=".6" fill="#7fd9ac"/><rect x="13" y="8.6" width="16.1" height="2.8" fill="#c9f2dc"/><rect x="12.4" y="8.4" width="2.2" height="2.6" fill="#3fae78"/><rect x="7" y="13.4" width="25" height="5.6" rx="1" fill="#d9315c"/><rect x="8.4" y="14.7" width="23.6" height="3" fill="#f1ece6"/><rect x="7.2" y="19.7" width="25.8" height="6" rx="1" fill="#f06a9c"/><rect x="8.6" y="21.2" width="6" height="2" fill="#f79bbd"/><rect x="7.2" y="26.5" width="25.8" height="6.6" rx="1" fill="#d9582f"/><rect x="8.8" y="27.8" width="23.6" height="3.6" fill="#efeae4"/></g></svg><h3><b style="width:90.53px;transform:scaleX(0.8057)">Books,Sports</b> <b style="width:10.43px;transform:scaleX(0.8352)">&amp;</b> <b style="width:56.12px;transform:scaleX(0.8232)">Hobbies</b></h3><ul class="c3"><li><svg class="st" viewBox="0 -1504 1664 1587"><path transform="scale(1,-1)" d="M1137 532 1443 829 1021 891 832 1273 643 891 221 829 527 532 454 111 832 310 1209 111ZM1664 889Q1664 867 1638 841L1275 487L1361 -13Q1362 -20 1362 -33Q1362 -83 1321 -83Q1302 -83 1281 -71L832 165L383 -71Q361 -83 343 -83Q322 -83 311.5 -68.5Q301 -54 301 -33Q301 -27 303 -13L389 487L25 841Q0 868 0 889Q0 926 56 935L558 1008L783 1463Q802 1504 832.0 1504.0Q862 1504 881 1463L1106 1008L1608 935Q1664 926 1664 889Z"/></svg><a href="#"><b style="width:33.45px;transform:scaleX(1.0028)">Books</b> <b style="width:19.92px;transform:scaleX(0.9945)">and</b> <b style="width:58.33px;transform:scaleX(1.0051)">Magazines</b></a></li><li><svg class="st" viewBox="0 -1504 1664 1587"><path transform="scale(1,-1)" d="M1137 532 1443 829 1021 891 832 1273 643 891 221 829 527 532 454 111 832 310 1209 111ZM1664 889Q1664 867 1638 841L1275 487L1361 -13Q1362 -20 1362 -33Q1362 -83 1321 -83Q1302 -83 1281 -71L832 165L383 -71Q361 -83 343 -83Q322 -83 311.5 -68.5Q301 -54 301 -33Q301 -27 303 -13L389 487L25 841Q0 868 0 889Q0 926 56 935L558 1008L783 1463Q802 1504 832.0 1504.0Q862 1504 881 1463L1106 1008L1608 935Q1664 926 1664 889Z"/></svg><a href="#"><b style="width:24.20px;transform:scaleX(0.9804)">Coin</b> <b style="width:19.92px;transform:scaleX(0.9945)">and</b> <b style="width:65.81px;transform:scaleX(1.0067)">Collectables</b></a></li><li><svg class="st" viewBox="0 -1504 1664 1587"><path transform="scale(1,-1)" d="M1137 532 1443 829 1021 891 832 1273 643 891 221 829 527 532 454 111 832 310 1209 111ZM1664 889Q1664 867 1638 841L1275 487L1361 -13Q1362 -20 1362 -33Q1362 -83 1321 -83Q1302 -83 1281 -71L832 165L383 -71Q361 -83 343 -83Q322 -83 311.5 -68.5Q301 -54 301 -33Q301 -27 303 -13L389 487L25 841Q0 868 0 889Q0 926 56 935L558 1008L783 1463Q802 1504 832.0 1504.0Q862 1504 881 1463L1106 1008L1608 935Q1664 926 1664 889Z"/></svg><a href="#"><b style="width:24.38px;transform:scaleX(0.9618)">Gym</b> <b style="width:19.92px;transform:scaleX(0.9945)">and</b> <b style="width:38.86px;transform:scaleX(1.0044)">Fitness</b></a></li><li><svg class="st" viewBox="0 -1504 1664 1587"><path transform="scale(1,-1)" d="M1137 532 1443 829 1021 891 832 1273 643 891 221 829 527 532 454 111 832 310 1209 111ZM1664 889Q1664 867 1638 841L1275 487L1361 -13Q1362 -20 1362 -33Q1362 -83 1321 -83Q1302 -83 1281 -71L832 165L383 -71Q361 -83 343 -83Q322 -83 311.5 -68.5Q301 -54 301 -33Q301 -27 303 -13L389 487L25 841Q0 868 0 889Q0 926 56 935L558 1008L783 1463Q802 1504 832.0 1504.0Q862 1504 881 1463L1106 1008L1608 935Q1664 926 1664 889Z"/></svg><a href="#"><b style="width:41.94px;transform:scaleX(1.0307)">Musical</b> <b style="width:60.27px;transform:scaleX(1.0266)">Instuments</b></a></li><li><svg class="st" viewBox="0 -1504 1664 1587"><path transform="scale(1,-1)" d="M1137 532 1443 829 1021 891 832 1273 643 891 221 829 527 532 454 111 832 310 1209 111ZM1664 889Q1664 867 1638 841L1275 487L1361 -13Q1362 -20 1362 -33Q1362 -83 1321 -83Q1302 -83 1281 -71L832 165L383 -71Q361 -83 343 -83Q322 -83 311.5 -68.5Q301 -54 301 -33Q301 -27 303 -13L389 487L25 841Q0 868 0 889Q0 926 56 935L558 1008L783 1463Q802 1504 832.0 1504.0Q862 1504 881 1463L1106 1008L1608 935Q1664 926 1664 889Z"/></svg><a href="#"><b style="width:35.42px;transform:scaleX(0.9835)">Others</b> <b style="width:44.36px;transform:scaleX(1.0075)">Hobbies</b></a></li></ul></div>
<div class="cat" style="left:569px;top:536px"><svg class="ic" viewBox="0 0 40 40"><circle cx="20" cy="20" r="18.6" fill="#fff" stroke="#1a90dd" stroke-width="2.9"/><path d="M13.9 13.600c0-3 1.8-5 4.1-5s4.1 2 4.1 5c.5 0 .7.6.5 1.6-.2.8-.5 1.2-.9 1.2-.6 2.2-2 3.6-3.7 3.600s-3.1-1.4-3.7-3.600c-.4 0-.7-.4-.9-1.2-.2-1 0-1.6.5-1.600z" fill="#333"/><path d="M8 28.800c.4-3.4 1.4-5.2 3.2-5.800l4.2-1.8 2.6 2 2.6-2 4.2 1.800c1.8.6 2.8 2.4 3.2 5.800z" fill="#333"/><path d="M15.6 22 18 24l2.4-2 .8 6.800h-6.400z" fill="#fff"/><path d="M17.2 23.600h1.600l.7 5.200h-3z" fill="#1a90dd"/><circle cx="27.3" cy="26.7" r="4.5" fill="#1a90dd" stroke="#fff" stroke-width=".7"/><rect x="26.7" y="25.9" width="1.2" height="3.4" fill="#fff"/><rect x="26.7" y="23.9" width="1.2" height="1.2" fill="#fff"/></svg><h3><b style="width:29.10px;transform:scaleX(0.7213)">Jobs</b></h3><ul class="c3"><li><svg class="st" viewBox="0 -1504 1664 1587"><path transform="scale(1,-1)" d="M1137 532 1443 829 1021 891 832 1273 643 891 221 829 527 532 454 111 832 310 1209 111ZM1664 889Q1664 867 1638 841L1275 487L1361 -13Q1362 -20 1362 -33Q1362 -83 1321 -83Q1302 -83 1281 -71L832 165L383 -71Q361 -83 343 -83Q322 -83 311.5 -68.5Q301 -54 301 -33Q301 -27 303 -13L389 487L25 841Q0 868 0 889Q0 926 56 935L558 1008L783 1463Q802 1504 832.0 1504.0Q862 1504 881 1463L1106 1008L1608 935Q1664 926 1664 889Z"/></svg><a href="#"><b style="width:18.97px;transform:scaleX(0.9806)">Full</b> <b style="width:26.97px;transform:scaleX(1.0280)">Time</b> <b style="width:26.41px;transform:scaleX(1.0413)">Jobs</b></a></li></ul></div>
<div class="side"></div><div class="shr"></div>
<div class="card"><div class="clip"><div class="cin">
<h4 style="margin-top:0px"><svg class="an" style="top:-1.5px" viewBox="0 -1536 1792 1776"><path transform="scale(1,-1)" d="M941.0 1235.0Q960 1254 960.0 1280.0Q960 1306 941.0 1325.0Q922 1344 896.0 1344.0Q870 1344 851.0 1325.0Q832 1306 832.0 1280.0Q832 1254 851.0 1235.0Q870 1216 896.0 1216.0Q922 1216 941.0 1235.0ZM1792 352V0Q1792 -22 1772 -30Q1764 -32 1760 -32Q1748 -32 1737 -23L1644 70Q1525 -73 1325.5 -156.5Q1126 -240 896.0 -240.0Q666 -240 466.5 -156.5Q267 -73 148 70L55 -23Q46 -32 32 -32Q28 -32 20 -30Q0 -22 0 0V352Q0 366 9.0 375.0Q18 384 32 384H384Q406 384 414 364Q422 345 407 329L307 229Q374 138 496.5 75.5Q619 13 768 -7V640H576Q550 640 531.0 659.0Q512 678 512 704V832Q512 858 531.0 877.0Q550 896 576 896H768V1059Q710 1093 675.0 1151.5Q640 1210 640 1280Q640 1386 715.0 1461.0Q790 1536 896.0 1536.0Q1002 1536 1077.0 1461.0Q1152 1386 1152 1280Q1152 1210 1117.0 1151.5Q1082 1093 1024 1059V896H1216Q1242 896 1261.0 877.0Q1280 858 1280 832V704Q1280 678 1261.0 659.0Q1242 640 1216 640H1024V-7Q1173 13 1295.5 75.5Q1418 138 1485 229L1385 329Q1370 345 1378 364Q1386 384 1408 384H1760Q1774 384 1783.0 375.0Q1792 366 1792 352Z"/></svg><span class="w up"><b style="width:30.56px;transform:scaleX(0.8815)">Post</b> <b style="width:29.25px;transform:scaleX(0.8655)">Free</b> <b style="width:66.67px;transform:scaleX(0.8820)">Classified</b></span></h4>
<h4><span class="w"><b style="width:25.97px;transform:scaleX(0.8589)">Ads</b></span></h4>
<p style="margin-top:14px"><span><b style="width:24.92px;transform:scaleX(0.9388)">Free</b> <b style="width:34.75px;transform:scaleX(1.0086)">online</b> <b style="width:35.20px;transform:scaleX(1.0009)">Indian</b></span><span><b style="width:64.72px;transform:scaleX(1.0252)">classifieds.</b> <b style="width:23.33px;transform:scaleX(0.9291)">Sell,</b> <b style="width:23.14px;transform:scaleX(0.9303)">Buy,</b> <b style="width:24.69px;transform:scaleX(0.9832)">Find</b> <b style="width:3.58px;transform:scaleX(0.8297)">-</b></span><span><b style="width:33.61px;transform:scaleX(1.0411)">faster</b> <b style="width:21.44px;transform:scaleX(0.9949)">and</b> <b style="width:38.02px;transform:scaleX(0.9810)">easier:</b> <b style="width:27.78px;transform:scaleX(1.0189)">flats,</b></span><span><b style="width:68.92px;transform:scaleX(1.0112)">apartments,</b> <b style="width:44.30px;transform:scaleX(0.9796)">houses,</b> <b style="width:19.48px;transform:scaleX(0.8763)">PG,</b></span><span><b style="width:26.91px;transform:scaleX(0.9868)">jobs,</b> <b style="width:11.03px;transform:scaleX(0.9605)">IT</b> <b style="width:26.91px;transform:scaleX(0.9868)">jobs,</b> <b style="width:25.08px;transform:scaleX(0.9198)">BPO</b> <b style="width:26.91px;transform:scaleX(0.9868)">jobs,</b></span><span><b style="width:27.36px;transform:scaleX(0.9782)">cars,</b> <b style="width:27.91px;transform:scaleX(0.9967)">used</b> <b style="width:27.36px;transform:scaleX(0.9782)">cars,</b> <b style="width:27.91px;transform:scaleX(0.9967)">used</b> <b style="width:32.86px;transform:scaleX(0.9745)">bikes,</b></span><span class="l"><b style="width:94.39px;transform:scaleX(1.0047)">motorcycles.......</b></span></p>
<h4 style="margin-top:11px"><svg class="an" viewBox="0 -1536 1792 1776"><path transform="scale(1,-1)" d="M941.0 1235.0Q960 1254 960.0 1280.0Q960 1306 941.0 1325.0Q922 1344 896.0 1344.0Q870 1344 851.0 1325.0Q832 1306 832.0 1280.0Q832 1254 851.0 1235.0Q870 1216 896.0 1216.0Q922 1216 941.0 1235.0ZM1792 352V0Q1792 -22 1772 -30Q1764 -32 1760 -32Q1748 -32 1737 -23L1644 70Q1525 -73 1325.5 -156.5Q1126 -240 896.0 -240.0Q666 -240 466.5 -156.5Q267 -73 148 70L55 -23Q46 -32 32 -32Q28 -32 20 -30Q0 -22 0 0V352Q0 366 9.0 375.0Q18 384 32 384H384Q406 384 414 364Q422 345 407 329L307 229Q374 138 496.5 75.5Q619 13 768 -7V640H576Q550 640 531.0 659.0Q512 678 512 704V832Q512 858 531.0 877.0Q550 896 576 896H768V1059Q710 1093 675.0 1151.5Q640 1210 640 1280Q640 1386 715.0 1461.0Q790 1536 896.0 1536.0Q1002 1536 1077.0 1461.0Q1152 1386 1152 1280Q1152 1210 1117.0 1151.5Q1082 1093 1024 1059V896H1216Q1242 896 1261.0 877.0Q1280 858 1280 832V704Q1280 678 1261.0 659.0Q1242 640 1216 640H1024V-7Q1173 13 1295.5 75.5Q1418 138 1485 229L1385 329Q1370 345 1378 364Q1386 384 1408 384H1760Q1774 384 1783.0 375.0Q1792 366 1792 352Z"/></svg><span class="w"><b style="width:30.56px;transform:scaleX(0.8815)">Post</b> <b style="width:25.97px;transform:scaleX(0.8589)">Ads</b> <b style="width:50.02px;transform:scaleX(0.8794)">without</b></span></h4>
<h4><span class="w"><b style="width:86.19px;transform:scaleX(0.8813)">Reigistration</b></span></h4>
<p style="margin-top:14px"><span><b style="width:112.03px;transform:scaleX(1.0139)">ebsindiaonline.com</b> <b style="width:37.03px;transform:scaleX(1.0322)">allows</b></span><span><b style="width:20.50px;transform:scaleX(0.9850)">you</b> <b style="width:11.47px;transform:scaleX(1.0653)">to</b> <b style="width:25.50px;transform:scaleX(1.0448)">post</b> <b style="width:56.30px;transform:scaleX(1.0061)">Classified</b> <b style="width:20.97px;transform:scaleX(1.0075)">ads</b></span><span><b style="width:42.88px;transform:scaleX(1.0481)">without</b> <b style="width:65.36px;transform:scaleX(1.0235)">registration</b> <b style="width:11.73px;transform:scaleX(1.0218)">or</b></span><span><b style="width:31.42px;transform:scaleX(1.0182)">login.</b> <b style="width:25.12px;transform:scaleX(1.0614)">Just</b> <b style="width:29.05px;transform:scaleX(0.9637)">Copy</b> <b style="width:32.00px;transform:scaleX(1.0134)">paste</b> <b style="width:24.88px;transform:scaleX(0.9907)">your</b></span><span><b style="width:14.31px;transform:scaleX(0.9967)">ad</b> <b style="width:21.44px;transform:scaleX(0.9949)">and</b> <b style="width:26.34px;transform:scaleX(1.0492)">click</b> <b style="width:39.70px;transform:scaleX(1.0444)">submit</b> <b style="width:11.47px;transform:scaleX(1.0653)">to</b></span><span class="l"><b style="width:45.06px;transform:scaleX(1.0126)">publish.</b></span></p>
<h4 style="margin-top:11px"><svg class="an" viewBox="0 -1536 1792 1776"><path transform="scale(1,-1)" d="M941.0 1235.0Q960 1254 960.0 1280.0Q960 1306 941.0 1325.0Q922 1344 896.0 1344.0Q870 1344 851.0 1325.0Q832 1306 832.0 1280.0Q832 1254 851.0 1235.0Q870 1216 896.0 1216.0Q922 1216 941.0 1235.0ZM1792 352V0Q1792 -22 1772 -30Q1764 -32 1760 -32Q1748 -32 1737 -23L1644 70Q1525 -73 1325.5 -156.5Q1126 -240 896.0 -240.0Q666 -240 466.5 -156.5Q267 -73 148 70L55 -23Q46 -32 32 -32Q28 -32 20 -30Q0 -22 0 0V352Q0 366 9.0 375.0Q18 384 32 384H384Q406 384 414 364Q422 345 407 329L307 229Q374 138 496.5 75.5Q619 13 768 -7V640H576Q550 640 531.0 659.0Q512 678 512 704V832Q512 858 531.0 877.0Q550 896 576 896H768V1059Q710 1093 675.0 1151.5Q640 1210 640 1280Q640 1386 715.0 1461.0Q790 1536 896.0 1536.0Q1002 1536 1077.0 1461.0Q1152 1386 1152 1280Q1152 1210 1117.0 1151.5Q1082 1093 1024 1059V896H1216Q1242 896 1261.0 877.0Q1280 858 1280 832V704Q1280 678 1261.0 659.0Q1242 640 1216 640H1024V-7Q1173 13 1295.5 75.5Q1418 138 1485 229L1385 329Q1370 345 1378 364Q1386 384 1408 384H1760Q1774 384 1783.0 375.0Q1792 366 1792 352Z"/></svg><span class="w"><b style="width:30.56px;transform:scaleX(0.8815)">Post</b> <b style="width:26.97px;transform:scaleX(0.9186)">free</b> <b style="width:66.67px;transform:scaleX(0.8820)">Classified</b></span></h4>
<h4><span class="w"><b style="width:25.97px;transform:scaleX(0.8589)">Ads</b></span></h4>
</div></div></div>
</body></html>
